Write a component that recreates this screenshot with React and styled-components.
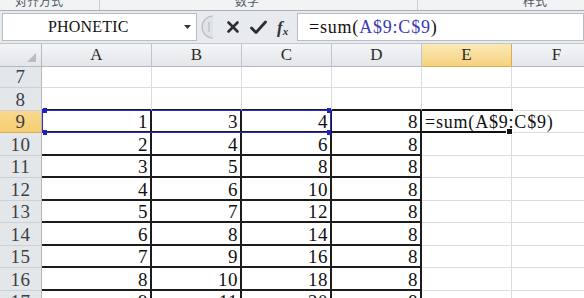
import React from 'react';
import styled, { createGlobalStyle } from 'styled-components';

const GlobalStyle = createGlobalStyle`
  html, body { margin: 0; padding: 0; background: #fff; overflow: hidden; }
  body { font-family: "Liberation Serif", "Noto Sans CJK SC", serif; }
`;

const COLS = [
  { key: 'A', w: 110 },
  { key: 'B', w: 90 },
  { key: 'C', w: 90 },
  { key: 'D', w: 90 },
  { key: 'E', w: 90 },
  { key: 'F', w: 90 },
];

const ROWS = [
  { n: 7, h: 21, v: [] },
  { n: 8, h: 23, v: [] },
  { n: 9, h: 22, v: [1, 3, 4, 8], active: true },
  { n: 10, h: 23, v: [2, 4, 6, 8] },
  { n: 11, h: 22, v: [3, 5, 8, 8] },
  { n: 12, h: 23, v: [4, 6, 10, 8] },
  { n: 13, h: 22, v: [5, 7, 12, 8] },
  { n: 14, h: 23, v: [6, 8, 14, 8] },
  { n: 15, h: 22, v: [7, 9, 16, 8] },
  { n: 16, h: 23, v: [8, 10, 18, 8] },
  { n: 17, h: 22, v: [9, 11, 20, 8] },
];

const Page = styled.div`
  width: 584px;
  height: 298px;
  overflow: hidden;
  display: flex;
  flex-direction: column;
  background: #fff;
  & > * { flex: none; }
`;

const Ribbon = styled.div`
  height: 10px;
  display: grid;
  grid-template-columns: 100px 318px 1fr;
  background: #f1f3f5;
  border-bottom: 1px solid #aab0b8;
  overflow: hidden;
`;

const RibbonGroup = styled.div`
  display: flex;
  align-items: flex-end;
  height: 10px;
  padding-left: ${(p) => p.$pad}px;
  border-right: ${(p) => (p.$last ? 'none' : '1px solid #c9ced4')};
  overflow: hidden;
`;

const RibbonLabel = styled.span`
  font-family: "Noto Sans CJK SC", sans-serif;
  font-size: 12px;
  line-height: 12px;
  margin-bottom: 3px;
  color: #4f5866;
  white-space: nowrap;
`;

const FormulaBar = styled.div`
  height: 33px;
  box-sizing: border-box;
  display: flex;
  align-items: center;
  padding: 2px 0 2px 2px;
  background: #e7eaee;
  border-bottom: 1px solid #c3c8cf;
`;

const NameBox = styled.div`
  width: 195px;
  height: 28px;
  box-sizing: border-box;
  display: flex;
  align-items: center;
  background: #fff;
  border: 1px solid #b7bdc5;
  padding-left: 45px;
  padding-right: 5px;
`;

const NameText = styled.span`
  flex: 1;
  font-family: "Liberation Serif", serif;
  font-size: 16px;
  letter-spacing: 0.2px;
  color: #111;
`;

const Controls = styled.div`
  width: 101px;
  height: 28px;
  display: flex;
  align-items: center;
  gap: 10px;
  padding-left: 3px;
  box-sizing: border-box;
  border-right: 1px solid #b7bdc5;
  & > :first-child { margin-right: 2px; }
`;

const Fx = styled.span`
  font-style: italic;
  font-weight: bold;
  font-size: 17px;
  color: #333;
  line-height: 1;
  & > sub {
    font-size: 11px;
    vertical-align: baseline;
    position: relative;
    top: 2px;
  }
`;

const FormulaInput = styled.div`
  flex: 1;
  height: 28px;
  box-sizing: border-box;
  display: flex;
  align-items: center;
  background: #fff;
  border: 1px solid #b7bdc5;
  border-left: none;
  padding-left: 11px;
  font-size: 18px;
  letter-spacing: 0.8px;
  color: #111;
  white-space: nowrap;
`;

const Ref = styled.span`
  color: ${(p) => p.$color};
`;

const Sheet = styled.div`
  position: relative;
  display: grid;
  grid-template-columns: 42px ${COLS.map((c) => c.w + 'px').join(' ')};
  align-content: start;
`;

const Corner = styled.div`
  height: 23px;
  box-sizing: border-box;
  background: linear-gradient(#f3f4f6, #e2e5e9);
  border-right: 1px solid #b4b9c0;
  border-bottom: 1px solid #b4b9c0;
  display: flex;
  align-items: flex-end;
  justify-content: flex-end;
  padding: 0 5px 4px 0;
`;

const ColHeader = styled.div`
  height: 23px;
  box-sizing: border-box;
  display: flex;
  align-items: center;
  justify-content: center;
  font-size: 17px;
  color: #2a2a2a;
  background: ${(p) =>
    p.$hl ? 'linear-gradient(#fbe9b6, #f6d27e)' : 'linear-gradient(#f4f5f7, #e3e6ea)'};
  border-right: 1px solid ${(p) => (p.$hl ? '#d9ad55' : '#c0c5cc')};
  border-bottom: 1px solid ${(p) => (p.$hl ? '#d9ad55' : '#b4b9c0')};
`;

const RowHeader = styled.div`
  height: ${(p) => p.$h}px;
  box-sizing: border-box;
  display: flex;
  align-items: flex-end;
  justify-content: center;
  padding-bottom: 1px;
  font-size: 19px;
  letter-spacing: 0.5px;
  line-height: 19px;
  color: #3b3f45;
  background: ${(p) => (p.$hl ? 'linear-gradient(#f9d88f, #f6cd70)' : '#e4e7ea')};
  border-right: 1px solid #b4b9c0;
  border-bottom: 1px solid ${(p) => (p.$hl ? '#d9ad55' : '#cdd1d6')};
`;

const Cell = styled.div`
  height: ${(p) => p.$h}px;
  box-sizing: border-box;
  display: flex;
  align-items: flex-end;
  justify-content: ${(p) => (p.$text ? 'flex-start' : 'flex-end')};
  padding: 0 ${(p) => (p.$box ? 2 : 3)}px 0 3px;
  font-size: ${(p) => (p.$text ? 18 : 19)}px;
  line-height: 19px;
  letter-spacing: ${(p) => (p.$text ? 0.8 : 0.5)}px;
  color: #111;
  white-space: nowrap;
  overflow: visible;
  position: relative;
  z-index: ${(p) => (p.$text ? 2 : 1)};
  border-right: ${(p) =>
    p.$noRight ? '1px solid transparent' : p.$box ? '2px solid #1c1c1c' : '1px solid #dadcdf'};
  border-bottom: ${(p) => (p.$boxBottom ? '2px solid #1c1c1c' : '1px solid #dadcdf')};
`;

const RangeMark = styled.div`
  position: absolute;
  left: 42px;
  top: ${(p) => p.$top}px;
  width: 289px;
  height: 23px;
  box-sizing: border-box;
  border: 1px solid #2b2bd0;
  z-index: 3;
  pointer-events: none;
`;

const Handle = styled.div`
  position: absolute;
  width: 4px;
  height: 5px;
  background: #2020c8;
  ${(p) => (p.$r ? 'right: -1px;' : 'left: 0;')}
  ${(p) => (p.$b ? 'bottom: -3px;' : 'top: -3px;')}
`;

const ActiveMark = styled.div`
  position: absolute;
  left: 422px;
  top: ${(p) => p.$top}px;
  width: 91px;
  height: 24px;
  box-sizing: border-box;
  border-top: 2px solid #111;
  border-bottom: 2px solid #111;
  z-index: 3;
  pointer-events: none;
`;

const FillHandle = styled.div`
  position: absolute;
  right: 0;
  bottom: -4px;
  width: 5px;
  height: 5px;
  background: #111;
  border: 1px solid #fff;
`;

function CornerCell() {
  return (
    <Corner>
      <svg width="9" height="9" viewBox="0 0 9 9">
        <polygon points="9,0 9,9 0,9" fill="#b7bcc3" />
      </svg>
    </Corner>
  );
}

export default function App() {
  const rowTop = (idx) => 23 + ROWS.slice(0, idx).reduce((s, r) => s + r.h, 0);
  const activeIdx = ROWS.findIndex((r) => r.active);

  return (
    <>
      <GlobalStyle />
      <Page>
        <Ribbon>
          <RibbonGroup $pad={15}>
            <RibbonLabel>对齐方式</RibbonLabel>
          </RibbonGroup>
          <RibbonGroup $pad={135}>
            <RibbonLabel>数字</RibbonLabel>
          </RibbonGroup>
          <RibbonGroup $pad={105} $last>
            <RibbonLabel>样式</RibbonLabel>
          </RibbonGroup>
        </Ribbon>

        <FormulaBar>
          <NameBox>
            <NameText>PHONETIC</NameText>
            <svg width="7" height="4" viewBox="0 0 7 4">
              <polygon points="0,0 7,0 3.5,4" fill="#333" />
            </svg>
          </NameBox>
          <Controls>
            <svg width="14" height="26" viewBox="0 0 14 26">
              <path d="M13 2 A11 11 0 0 0 13 24" fill="#dfe2e6" stroke="#b9bec5" strokeWidth="1.2" />
              <rect x="8" y="8" width="2" height="10" fill="#c9cdd2" />
            </svg>
            <svg width="14" height="14" viewBox="0 0 14 14">
              <path d="M2.5 2.5 L11.5 11.5 M11.5 2.5 L2.5 11.5" stroke="#2d2d2d" strokeWidth="2.6" strokeLinecap="round" />
            </svg>
            <svg width="17" height="15" viewBox="0 0 17 15">
              <path d="M1.5 8 L6 12.5 L15.5 2" stroke="#2d2d2d" strokeWidth="2.8" fill="none" strokeLinecap="round" strokeLinejoin="round" />
            </svg>
            <Fx>
              f<sub>x</sub>
            </Fx>
          </Controls>
          <FormulaInput>
            =sum(<Ref $color="#3a3ab8">A$9:C$9</Ref>)
          </FormulaInput>
        </FormulaBar>

        <Sheet>
          <CornerCell />
          {COLS.map((c) => (
            <ColHeader key={c.key} $hl={c.key === 'E'}>
              {c.key}
            </ColHeader>
          ))}
          {ROWS.map((r, ri) => {
            const inBox = r.v.length > 0;
            const nextBox = ri + 1 < ROWS.length && ROWS[ri + 1].v.length > 0;
            return (
              <React.Fragment key={r.n}>
                <RowHeader $h={r.h} $hl={r.active}>
                  {r.n}
                </RowHeader>
                {COLS.map((c, ci) => {
                  const boxed = ci < 4 && inBox;
                  const boxBottom = ci < 4 && (inBox || nextBox);
                  const isE = c.key === 'E' && r.active;
                  return (
                    <Cell
                      key={c.key}
                      $h={r.h}
                      $box={boxed}
                      $boxBottom={boxBottom}
                      $text={isE}
                      $noRight={isE}
                    >
                      {isE ? '=sum(A$9:C$9)' : ci < 4 ? r.v[ci] : ''}
                    </Cell>
                  );
                })}
              </React.Fragment>
            );
          })}
          <RangeMark $top={rowTop(activeIdx) - 1}>
            <Handle />
            <Handle $b />
            <Handle $r />
            <Handle $r $b />
          </RangeMark>
          <ActiveMark $top={rowTop(activeIdx) - 2}>
            <FillHandle />
          </ActiveMark>
        </Sheet>
      </Page>
    </>
  );
}
